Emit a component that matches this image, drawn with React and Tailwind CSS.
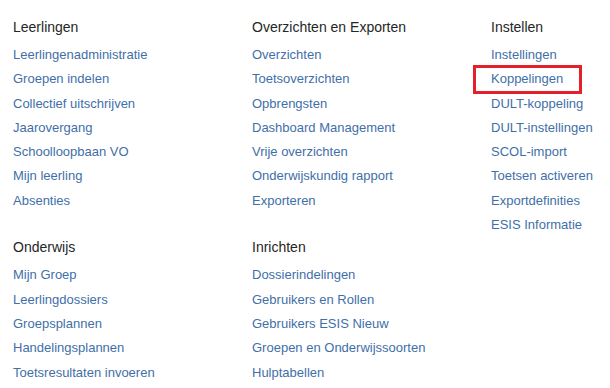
import React from "react"

const sections = [
  [
    {
      title: "Leerlingen",
      links: [
        "Leerlingenadministratie",
        "Groepen indelen",
        "Collectief uitschrijven",
        "Jaarovergang",
        "Schoolloopbaan VO",
        "Mijn leerling",
        "Absenties",
      ],
    },
    {
      title: "Overzichten en Exporten",
      links: [
        "Overzichten",
        "Toetsoverzichten",
        "Opbrengsten",
        "Dashboard Management",
        "Vrije overzichten",
        "Onderwijskundig rapport",
        "Exporteren",
      ],
    },
    {
      title: "Instellen",
      links: [
        "Instellingen",
        "Koppelingen",
        "DULT-koppeling",
        "DULT-instellingen",
        "SCOL-import",
        "Toetsen activeren",
        "Exportdefinities",
        "ESIS Informatie",
      ],
    },
  ],
  [
    {
      title: "Onderwijs",
      links: [
        "Mijn Groep",
        "Leerlingdossiers",
        "Groepsplannen",
        "Handelingsplannen",
        "Toetsresultaten invoeren",
      ],
    },
    {
      title: "Inrichten",
      links: [
        "Dossierindelingen",
        "Gebruikers en Rollen",
        "Gebruikers ESIS Nieuw",
        "Groepen en Onderwijssoorten",
        "Hulptabellen",
      ],
    },
  ],
]

function Column({ title, links }) {
  return (
    <div>
      <h3 className="text-[14px] leading-[20px] text-[#262626] mb-[5px]">{title}</h3>
      <ul>
        {links.map((link) => (
          <li key={link} className="h-[24.3px] leading-[24.3px]">
            <span className="relative">
              <a href="#" className="text-[13px] text-[#3f6fa8]">
                {link}
              </a>
              {link === "Koppelingen" && (
                <span className="absolute left-[-18px] top-[-4px] w-[109px] h-[29px] border-[3px] border-[#e4202b]" />
              )}
            </span>
          </li>
        ))}
      </ul>
    </div>
  )
}

export default function App() {
  return (
    <div
      className="w-[610px] h-[388px] overflow-hidden bg-white pt-[17px] pl-[13px]"
      style={{ fontFamily: '"Liberation Sans", Arial, sans-serif' }}
    >
      {sections.map((row, i) => (
        <div key={i} className={`grid grid-cols-[239px_239px_1fr] ${i > 0 ? "mt-[1px]" : ""}`}>
          {row.map((col) => (
            <Column key={col.title} {...col} />
          ))}
        </div>
      ))}
    </div>
  )
}
